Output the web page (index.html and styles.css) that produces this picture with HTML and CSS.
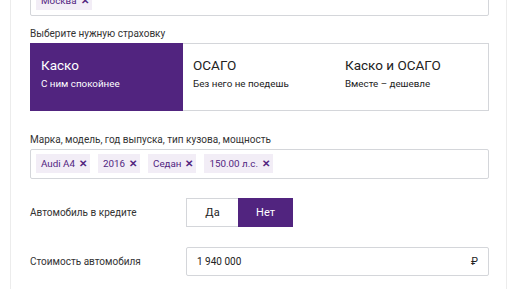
FILE: index.html
```html
<!DOCTYPE html>
<html lang="ru">
<head>
  <meta charset="UTF-8">
  <title>Страховка автомобиля</title>
  <link rel="stylesheet" href="styles.css">
</head>
<body>
  <div class="card">
    <div class="tags-input top-input">
      <span class="tag">Москва<span class="x">✕</span></span>
    </div>

    <div class="label">Выберите нужную страховку</div>
    <div class="options">
      <div class="option active">
        <div class="opt-title">Каско</div>
        <div class="opt-sub">С ним спокойнее</div>
      </div>
      <div class="option">
        <div class="opt-title">ОСАГО</div>
        <div class="opt-sub">Без него не поедешь</div>
      </div>
      <div class="option">
        <div class="opt-title">Каско и ОСАГО</div>
        <div class="opt-sub">Вместе – дешевле</div>
      </div>
    </div>

    <div class="label label-car">Марка, модель, год выпуска, тип кузова, мощность</div>
    <div class="tags-input">
      <span class="tag">Audi A4<span class="x">✕</span></span>
      <span class="tag">2016<span class="x">✕</span></span>
      <span class="tag">Седан<span class="x">✕</span></span>
      <span class="tag">150.00 л.с.<span class="x">✕</span></span>
    </div>

    <div class="row">
      <div class="row-label">Автомобиль в кредите</div>
      <div class="toggle">
        <button class="tg tg-yes">Да</button>
        <button class="tg tg-no active">Нет</button>
      </div>
    </div>

    <div class="row">
      <div class="row-label">Стоимость автомобиля</div>
      <div class="money">
        <span>1 940 000</span>
        <span class="rub">₽</span>
      </div>
    </div>
  </div>
</body>
</html>
```

FILE: styles.css
```css
body {
  margin: 0;
  font-family: Roboto, "Noto Sans", Arial, sans-serif;
  color: #333;
  background: #fff;
  overflow: hidden;
}
.card {
  margin: -14px 0 0 10px;
  width: 476px;
  height: 303px;
  padding: 0 0 0 19px;
  border-left: 1px solid #ececec;
  border-right: 1px solid #ececec;
}
.tags-input {
  width: 459px;
  box-sizing: border-box;
  height: 30px;
  border: 1px solid #d4d6da;
  border-radius: 2px;
  padding: 4px 5px;
  display: flex;
  gap: 8px;
}
.tag {
  display: inline-flex;
  align-items: center;
  height: 19px;
  padding: 0 3px 0 5px;
  background: #f2edf6;
  color: #51247f;
  font-size: 9.8px;
}
.tag .x {
  font-size: 9.5px;
  margin-left: 4px;
  font-weight: bold;
}
.label {
  font-size: 10px;
  color: #333;
  margin: 10px 0 0;
  height: 17px;
  line-height: 16px;
}
.options {
  width: 459px;
  height: 68px;
  box-sizing: border-box;
  border: 1px solid #d4d6da;
  display: grid;
  grid-template-columns: 152px 152px 1fr;
}
.option {
  padding: 12px 10px 0;
  color: #222;
}
.option.active {
  background: #51247f;
  color: #fff;
  margin: -1px 0 -1px -1px;
  padding-left: 11px;
  padding-top: 13px;
}
.opt-title {
  font-size: 13.5px;
  line-height: 18px;
}
.opt-sub {
  font-size: 9.8px;
  margin-top: 3px;
  line-height: 14px;
}
.label-car {
  margin-top: 21px;
}
.row {
  display: flex;
  align-items: center;
  margin-top: 19px;
}
.row + .row {
  margin-top: 20px;
}
.row-label {
  width: 156px;
  font-size: 10px;
  color: #333;
}
.toggle {
  display: flex;
}
.tg {
  height: 29px;
  font-family: inherit;
  font-size: 11px;
  border: 1px solid #d4d6da;
  background: #fff;
  color: #222;
  padding: 0;
}
.tg-yes {
  width: 52px;
  border-right: none;
}
.tg-no {
  width: 55px;
}
.tg.active {
  background: #51247f;
  border-color: #51247f;
  color: #fff;
}
.money {
  width: 303px;
  height: 29px;
  box-sizing: border-box;
  border: 1px solid #d4d6da;
  border-radius: 2px;
  display: flex;
  align-items: center;
  justify-content: space-between;
  padding: 0 10px;
  font-size: 10px;
  color: #222;
}
.rub {
  font-size: 10.5px;
}
```
